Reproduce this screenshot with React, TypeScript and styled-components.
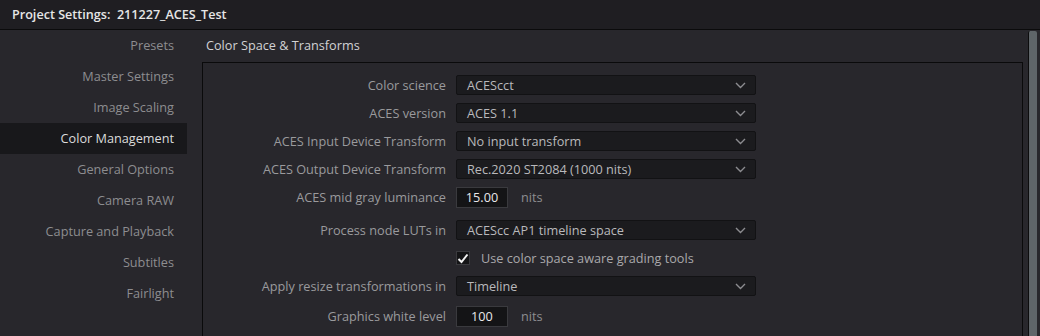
import styled, { createGlobalStyle } from 'styled-components'

const GlobalStyle = createGlobalStyle`
  html, body {
    margin: 0;
    padding: 0;
    background: #28272c;
  }
  * {
    box-sizing: border-box;
  }
`

const Window = styled.div`
  width: 1040px;
  height: 336px;
  overflow: hidden;
  background: #28272c;
  font-family: 'Open Sans', 'Noto Sans', sans-serif;
  font-size: 12.7px;
  display: flex;
  flex-direction: column;
`

const TitleBar = styled.div`
  height: 30px;
  flex: none;
  background: #1f1e22;
  border-bottom: 1px solid #0b0b0c;
  display: flex;
  align-items: center;
  padding-left: 12px;
  padding-bottom: 1px;
  color: #e6e6e6;
  font-weight: 600;
  font-size: 12.6px;
  white-space: pre;
`

const Body = styled.div`
  flex: 1;
  display: flex;
  min-height: 0;
`

const Sidebar = styled.div`
  width: 202px;
  flex: none;
  display: flex;
  flex-direction: column;
`

const NavItem = styled.div<{ $active?: boolean }>`
  width: 187px;
  height: 31px;
  display: flex;
  align-items: center;
  justify-content: flex-end;
  padding-right: 13px;
  padding-bottom: 2px;
  color: ${p => (p.$active ? '#dcdcdc' : '#8d8d90')};
  background: ${p => (p.$active ? '#18181b' : 'transparent')};
`

const Main = styled.div`
  flex: 1;
  display: flex;
  flex-direction: column;
  min-width: 0;
`

const SectionTitle = styled.div`
  height: 32px;
  flex: none;
  display: flex;
  align-items: center;
  padding-left: 4px;
  padding-bottom: 2px;
  color: #d2d2d4;
`

const Panel = styled.div`
  flex: 1;
  border: 1px solid #0a0a0b;
  border-bottom: none;
  padding-top: 8px;
  display: flex;
  flex-direction: column;
`

const Row = styled.div<{ $gap?: number }>`
  height: 28px;
  flex: none;
  margin-top: ${p => p.$gap ?? 0}px;
  display: grid;
  grid-template-columns: 243px auto auto;
  justify-content: start;
  align-items: center;
  column-gap: 10px;
`

const Label = styled.div`
  text-align: right;
  color: #9a9a9d;
  white-space: nowrap;
`

const Select = styled.div`
  width: 300px;
  height: 20px;
  background: #1b1b1e;
  border: 1px solid #121214;
  border-radius: 2px;
  display: flex;
  align-items: center;
  justify-content: space-between;
  padding: 0 9px 0 10px;
  color: #b9b9bc;
`

const NumberBox = styled.div`
  width: 52px;
  height: 21px;
  background: #141416;
  border: 1px solid #3a3a3e;
  display: flex;
  align-items: center;
  justify-content: center;
  color: #e8e8ea;
`

const Unit = styled.span`
  color: #8d8d90;
  padding-left: 3px;
`

const CheckRow = styled.div`
  grid-column: 2 / span 2;
  display: flex;
  align-items: center;
  gap: 11px;
  color: #a8a8ab;
`

const CheckBox = styled.div`
  width: 14px;
  height: 14px;
  background: #141416;
  border: 1px solid #3a3a3e;
  display: flex;
  align-items: center;
  justify-content: center;
`

const ScrollTrack = styled.div`
  width: 17px;
  flex: none;
  display: flex;
  padding: 1px 3px 0 5px;
`

const ScrollThumb = styled.div`
  flex: 1;
  background: #5f6569;
  border-left: 1px solid #0c0c0d;
  border-top-left-radius: 2px;
  border-top-right-radius: 2px;
`

const Chevron = () => (
  <svg width="11" height="7" viewBox="0 0 11 7">
    <path d="M1 1 L5.5 5.5 L10 1" fill="none" stroke="#8c8c90" strokeWidth="1.4" />
  </svg>
)

const Check = () => (
  <svg width="12" height="11" viewBox="0 0 12 11">
    <path d="M1.5 6 L4.5 9 L10.5 1.5" fill="none" stroke="#f2f2f2" strokeWidth="2" />
  </svg>
)

const navItems = [
  'Presets',
  'Master Settings',
  'Image Scaling',
  'Color Management',
  'General Options',
  'Camera RAW',
  'Capture and Playback',
  'Subtitles',
  'Fairlight',
]

export default function App() {
  return (
    <>
      <GlobalStyle />
      <Window>
        <TitleBar>Project Settings:  211227_ACES_Test</TitleBar>
        <Body>
          <Sidebar>
            {navItems.map(n => (
              <NavItem key={n} $active={n === 'Color Management'}>
                {n}
              </NavItem>
            ))}
          </Sidebar>
          <Main>
            <SectionTitle>Color Space &amp; Transforms</SectionTitle>
            <Panel>
              <Row>
                <Label>Color science</Label>
                <Select>
                  ACEScct
                  <Chevron />
                </Select>
              </Row>
              <Row>
                <Label>ACES version</Label>
                <Select>
                  ACES 1.1
                  <Chevron />
                </Select>
              </Row>
              <Row>
                <Label>ACES Input Device Transform</Label>
                <Select>
                  No input transform
                  <Chevron />
                </Select>
              </Row>
              <Row>
                <Label>ACES Output Device Transform</Label>
                <Select>
                  Rec.2020 ST2084 (1000 nits)
                  <Chevron />
                </Select>
              </Row>
              <Row>
                <Label>ACES mid gray luminance</Label>
                <NumberBox>15.00</NumberBox>
                <Unit>nits</Unit>
              </Row>
              <Row $gap={5}>
                <Label>Process node LUTs in</Label>
                <Select>
                  ACEScc AP1 timeline space
                  <Chevron />
                </Select>
              </Row>
              <Row>
                <Label />
                <CheckRow>
                  <CheckBox>
                    <Check />
                  </CheckBox>
                  Use color space aware grading tools
                </CheckRow>
              </Row>
              <Row>
                <Label>Apply resize transformations in</Label>
                <Select>
                  Timeline
                  <Chevron />
                </Select>
              </Row>
              <Row $gap={2}>
                <Label>Graphics white level</Label>
                <NumberBox>100</NumberBox>
                <Unit>nits</Unit>
              </Row>
            </Panel>
          </Main>
          <ScrollTrack>
            <ScrollThumb />
          </ScrollTrack>
        </Body>
      </Window>
    </>
  )
}
